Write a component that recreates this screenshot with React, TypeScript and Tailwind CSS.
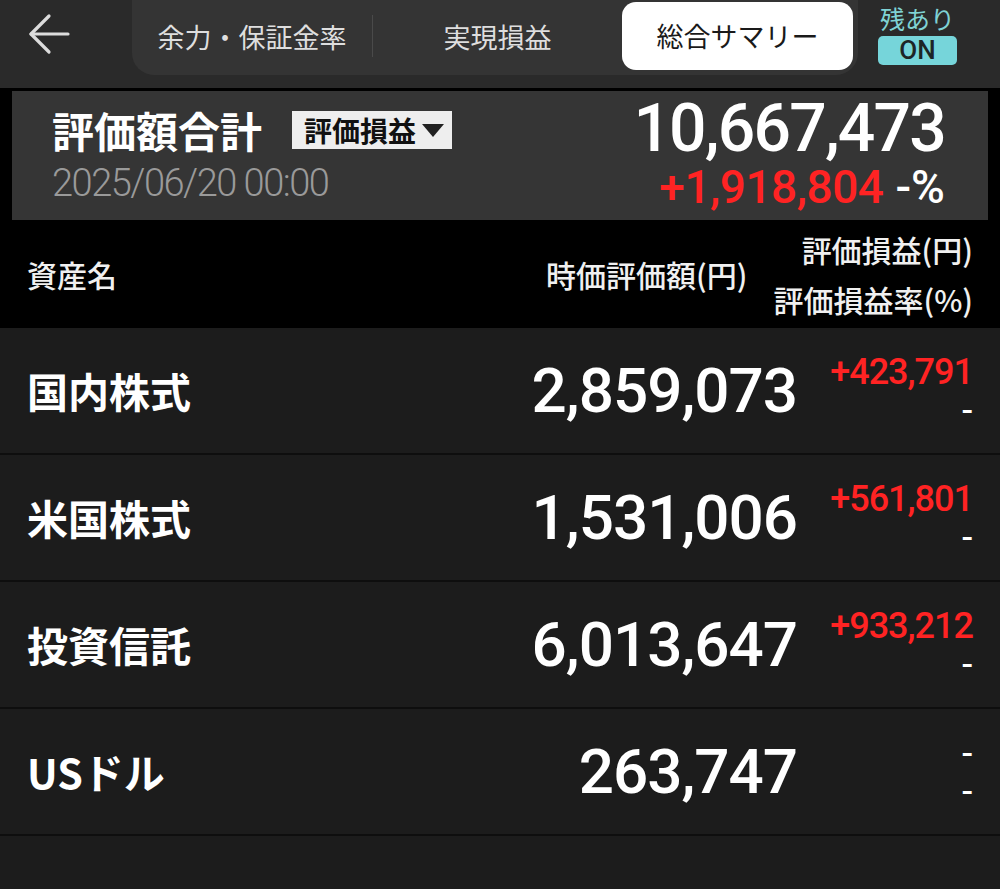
import React from 'react';

const CJK = { fontFamily: '"Noto Sans CJK JP", "Noto Sans", sans-serif' };
const NUM = { fontFamily: 'Roboto, "Noto Sans CJK JP", sans-serif' };

const rows = [
  { name: '国内株式', value: '2,859,073', pl: '+423,791' },
  { name: '米国株式', value: '1,531,006', pl: '+561,801' },
  { name: '投資信託', value: '6,013,647', pl: '+933,212' },
  { name: 'USドル', value: '263,747', pl: null },
];

const BackArrow = () => (
  <svg width="44" height="44" viewBox="0 0 44 44" fill="none" stroke="#dcdcdc" strokeWidth="3.2" strokeLinecap="round" strokeLinejoin="round">
    <path d="M4 21 H41" />
    <path d="M22 3 L4 21 L22 39" />
  </svg>
);

const App = () => {
  return (
    <div className="w-[1000px] h-[889px] overflow-hidden bg-[#1c1c1c] text-white" style={CJK}>
      {/* top bar */}
      <div className="h-[88px] bg-[#2a2a2a] flex items-start">
        <div className="w-[132px] pl-[27px] pt-[13px]">
          <BackArrow />
        </div>
        <div className="w-[726px] h-[75px] bg-[#343434] rounded-b-[22px] flex items-start">
          <div className="w-[240px] h-[75px] flex items-center justify-center text-[27px] text-[#dedede]">
            余力・保証金率
          </div>
          <div className="w-px h-[42px] mt-[15px] bg-[#4a4a4a]" />
          <div className="w-[249px] h-[75px] flex items-center justify-center text-[27px] text-[#dedede]">
            実現損益
          </div>
          <div className="w-[231px] h-[68px] mt-[2px] bg-white rounded-[14px] flex items-center justify-center text-[27px] text-[#1a1a1a]">
            総合サマリー
          </div>
        </div>
        <div className="ml-[20px] w-[79px] flex flex-col items-center">
          <div className="text-[25px] leading-[36px] text-[#7fd2d4]">残あり</div>
          <div className="w-[79px] h-[29px] rounded-[5px] bg-[#76d5da] flex items-center justify-center text-[26px] font-medium text-[#1d2526]" style={NUM}>
            ON
          </div>
        </div>
      </div>

      {/* summary */}
      <div className="bg-black px-[12px] pt-[3px]">
        <div className="h-[129px] bg-[#353535] flex justify-between pl-[40px] pr-[43px]">
          <div className="flex flex-col pt-[14px]">
            <div className="flex items-center">
              <span className="text-[42px] leading-[50px] font-bold">評価額合計</span>
              <span className="ml-[30px] h-[38px] w-[160px] bg-[#eeeeee] flex items-center pl-[12px] text-[28px] font-bold text-[#111]">
                評価損益
                <svg width="22" height="13" viewBox="0 0 22 13" className="ml-[6px]">
                  <path d="M0 0 H22 L11 13 Z" fill="#222" />
                </svg>
              </span>
            </div>
            <div className="mt-[8px] text-[38px] leading-[40px] font-light text-[#9a9a9a] tracking-[-1.5px]" style={NUM}>
              2025/06/20 00:00
            </div>
          </div>
          <div className="flex flex-col items-end pt-[5px]" style={NUM}>
            <div className="text-[66px] leading-none font-medium tracking-[-1.8px]">10,667,473</div>
            <div className="mt-[2px] text-[46px] leading-none font-medium">
              <span className="text-[#ff2323] tracking-[-0.5px]">+1,918,804</span>
              <span className="ml-[12px] text-white">-%</span>
            </div>
          </div>
        </div>

        {/* header */}
        <div className="h-[108px] -mx-[12px] flex items-center pl-[27px] pr-[27px] text-[30px] font-medium text-[#f0f0f0]">
          <span className="flex-1">資産名</span>
          <span>時価評価額(円)</span>
          <div className="ml-[26px] flex flex-col items-end leading-[50px]">
            <span>評価損益(円)</span>
            <span>評価損益率(%)</span>
          </div>
        </div>
      </div>

      {/* rows */}
      {rows.map((row) => (
        <div key={row.name} className="h-[127px] border-b-2 border-[#0e0e0e] flex items-center pl-[27px] pr-[27px]">
          <span className="flex-1 text-[41px] font-bold">{row.name}</span>
          <span className="text-[62px] font-medium tracking-[-1px]" style={NUM}>{row.value}</span>
          <div className="ml-[16px] w-[160px] flex flex-col items-end font-medium" style={NUM}>
            {row.pl ? (
              <span className="text-[36px] leading-[38px] text-[#ff2323] tracking-[-1px]">{row.pl}</span>
            ) : (
              <span className="text-[34px] leading-[38px]">-</span>
            )}
            <span className="text-[34px] leading-[38px]">-</span>
          </div>
        </div>
      ))}
    </div>
  );
};

export default App;
